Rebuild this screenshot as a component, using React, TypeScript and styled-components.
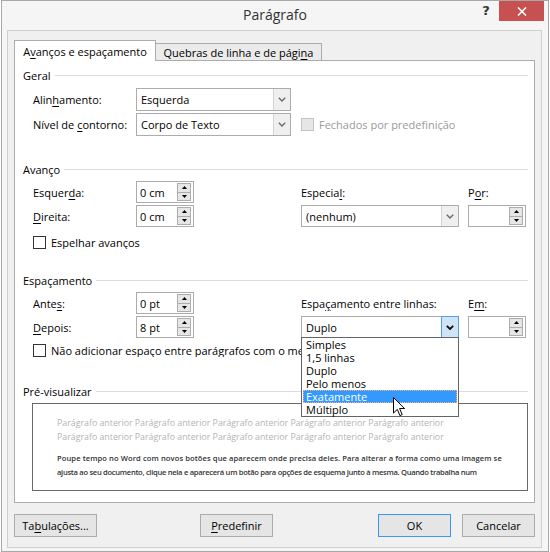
import styled, { createGlobalStyle } from "styled-components";

const GlobalStyle = createGlobalStyle`
  html, body {
    margin: 0;
    padding: 0;
    background: #ffffff;
  }
  body {
    font-family: "Open Sans", "Noto Sans", sans-serif;
    font-size: 11px;
    color: #000000;
  }
`;

const Window = styled.div`
  box-sizing: border-box;
  width: 548px;
  height: 552px;
  margin-left: 1px;
  background: #f5f5f5;
  border: 1px solid #a8a8a8;
  display: flex;
  flex-direction: column;
`;

const TitleBar = styled.div`
  height: 29px;
  display: grid;
  grid-template-columns: 1fr auto 1fr;
  align-items: start;
`;

const Title = styled.div`
  grid-column: 2;
  padding-top: 4px;
  font-size: 14px;
  color: #333333;
`;

const Caption = styled.div`
  grid-column: 3;
  justify-self: end;
  display: flex;
  align-items: flex-start;
  margin-right: 4px;
`;

const HelpGlyph = styled.div`
  width: 26px;
  padding-top: 2px;
  text-align: center;
  font-family: "DejaVu Sans", sans-serif;
  font-weight: bold;
  font-size: 13px;
  color: #333333;
`;

const CloseButton = styled.div`
  width: 45px;
  height: 20px;
  background: #c75050;
  display: flex;
  align-items: center;
  justify-content: center;
`;

const Client = styled.div`
  box-sizing: border-box;
  height: 518px;
  margin: 0 6px 0 5px;
  padding: 10px 6px 0 6px;
  background: #f0f0f0;
  border: 1px solid #cfcfcf;
  display: flex;
  flex-direction: column;
`;

const TabStrip = styled.div`
  display: flex;
  align-items: flex-end;
  height: 20px;
  margin-bottom: -1px;
  position: relative;
  z-index: 2;
`;

const Tab = styled.div<{ $active?: boolean }>`
  box-sizing: border-box;
  height: ${(p) => (p.$active ? 21 : 18)}px;
  width: ${(p) => (p.$active ? 142 : 167)}px;
  margin-left: ${(p) => (p.$active ? 0 : -1)}px;
  padding-top: ${(p) => (p.$active ? 3 : 1)}px;
  text-align: center;
  white-space: nowrap;
  border: 1px solid #acacac;
  border-bottom: ${(p) => (p.$active ? "none" : "1px solid #acacac")};
  background: ${(p) => (p.$active ? "#ffffff" : "#ebebeb")};
  position: relative;
  z-index: ${(p) => (p.$active ? 2 : 1)};
`;

const Panel = styled.div`
  box-sizing: border-box;
  height: 443px;
  padding: 0 6px 0 8px;
  background: #ffffff;
  border: 1px solid #acacac;
  position: relative;
  z-index: 1;
`;

const GroupHeading = styled.div<{ $top: number }>`
  margin-top: ${(p) => p.$top}px;
  height: 15px;
  line-height: 15px;
  display: flex;
  align-items: center;
  gap: 4px;
  white-space: nowrap;

  &::after {
    content: "";
    flex: 1;
    height: 1px;
    background: #dcdcdc;
  }
`;

const FieldGrid = styled.div<{ $top: number; $rowH: number; $gap: number }>`
  margin-top: ${(p) => p.$top}px;
  padding-left: 10px;
  display: grid;
  grid-template-columns: 103px 165px 167px 58px;
  grid-auto-rows: ${(p) => p.$rowH}px;
  row-gap: ${(p) => p.$gap}px;
`;

const Label = styled.div<{ $col?: number }>`
  grid-column: ${(p) => p.$col ?? 1};
  align-self: center;
  white-space: nowrap;
`;

const Cell = styled.div<{ $col: number; $span?: number }>`
  grid-column: ${(p) => p.$col} / span ${(p) => p.$span ?? 1};
  display: flex;
  align-items: stretch;
  position: relative;
`;

const Key = styled.span`
  text-decoration: underline;
  text-underline-offset: 2px;
`;

const ComboBox = styled.div<{ $w: number }>`
  box-sizing: border-box;
  width: ${(p) => p.$w}px;
  display: flex;
  background: #ffffff;
  border: 1px solid #acacac;
`;

const ComboText = styled.div`
  flex: 1;
  padding-left: 4px;
  display: flex;
  align-items: center;
  white-space: nowrap;
`;

const ComboButton = styled.div<{ $hot?: boolean }>`
  box-sizing: border-box;
  width: ${(p) => (p.$hot ? 18 : 17)}px;
  margin: ${(p) => (p.$hot ? "-1px -1px -1px 0" : "0")};
  display: flex;
  align-items: center;
  justify-content: center;
  background: ${(p) => (p.$hot ? "#cfe4f7" : "#efefef")};
  border-left: 1px solid ${(p) => (p.$hot ? "#569de5" : "#d4d4d4")};
  border-top: ${(p) => (p.$hot ? "1px solid #569de5" : "none")};
  border-right: ${(p) => (p.$hot ? "1px solid #569de5" : "none")};
  border-bottom: ${(p) => (p.$hot ? "1px solid #569de5" : "none")};
`;

const Spinner = styled.div`
  box-sizing: border-box;
  width: 58px;
  padding: 1px 2px 1px 0;
  display: flex;
  background: #ffffff;
  border: 1px solid #acacac;
`;

const SpinText = styled.div`
  flex: 1;
  padding-left: 3px;
  display: flex;
  align-items: center;
  white-space: nowrap;
`;

const SpinButtons = styled.div`
  width: 14px;
  display: flex;
  flex-direction: column;
`;

const SpinButton = styled.div`
  flex: 1;
  display: flex;
  align-items: center;
  justify-content: center;
  background: #e6e6e6;
  border: 1px solid #adadad;

  & + & {
    border-top: none;
  }
`;

const CheckRow = styled.label<{ $top: number; $disabled?: boolean; $clip?: number }>`
  margin-top: ${(p) => p.$top}px;
  padding-left: ${(p) => (p.$disabled ? 0 : 10)}px;
  height: 13px;
  width: ${(p) => (p.$clip ? `${p.$clip}px` : "auto")};
  overflow: hidden;
  display: flex;
  align-items: center;
  gap: 5px;
  white-space: nowrap;
  color: ${(p) => (p.$disabled ? "#9a9a9a" : "#000000")};
  align-self: center;
`;

const CheckBox = styled.span<{ $disabled?: boolean }>`
  box-sizing: border-box;
  flex: none;
  width: 13px;
  height: 13px;
  background: ${(p) => (p.$disabled ? "#e6e6e6" : "#ffffff")};
  border: 1px solid ${(p) => (p.$disabled ? "#c4c4c4" : "#333333")};
`;

const DropList = styled.div`
  box-sizing: border-box;
  position: absolute;
  top: calc(100% - 1px);
  left: 0;
  width: 158px;
  padding: 0 1px;
  background: #ffffff;
  border: 1px solid #646464;
  z-index: 10;
`;

const DropItem = styled.div<{ $selected?: boolean }>`
  height: 13px;
  line-height: 13px;
  padding-left: 3px;
  white-space: nowrap;
  background: ${(p) => (p.$selected ? "#3399ff" : "transparent")};
  color: ${(p) => (p.$selected ? "#ffffff" : "#000000")};
  outline: ${(p) => (p.$selected ? "1px dotted #f3b27a" : "none")};
  outline-offset: -1px;
`;

const Pointer = styled.svg`
  position: absolute;
  left: 91px;
  top: 59px;
`;

const PreviewBox = styled.div`
  box-sizing: border-box;
  height: 88px;
  margin: 4px 0 0 9px;
  padding: 12px 0 0 24px;
  background: #ffffff;
  border: 1px solid #696969;
  overflow: hidden;
`;

const PreviewLine = styled.div<{ $muted?: boolean; $track?: number }>`
  height: 14px;
  line-height: 14px;
  white-space: nowrap;
  font-size: ${(p) => (p.$muted ? 8.8 : 7.6)}px;
  font-weight: ${(p) => (p.$muted ? 400 : 600)};
  letter-spacing: ${(p) => p.$track ?? 0}px;
  color: ${(p) => (p.$muted ? "#b4b4b4" : "#333333")};
`;

const PreviewGap = styled.div`
  height: 7px;
`;

const ButtonRow = styled.div`
  margin-top: 11px;
  display: flex;
  height: 23px;
`;

const DialogButton = styled.div<{ $w: number; $default?: boolean; $gap?: number }>`
  box-sizing: border-box;
  width: ${(p) => p.$w}px;
  margin-left: ${(p) => p.$gap ?? 0}px;
  display: flex;
  align-items: center;
  justify-content: center;
  background: #e5e5e5;
  border: 1px solid ${(p) => (p.$default ? "#3399ff" : "#acacac")};
`;

const Spacer = styled.div`
  flex: 1;
`;

function Chevron({ hot }: { hot?: boolean }) {
  return (
    <svg width="8" height="5" viewBox="0 0 8 5">
      <path
        d="M0.8 0.8 L4 4 L7.2 0.8"
        fill="none"
        stroke={hot ? "#111111" : "#6a6a6a"}
        strokeWidth={hot ? 1.9 : 1.4}
      />
    </svg>
  );
}

function Combo({ value, width, hot }: { value: string; width: number; hot?: boolean }) {
  return (
    <ComboBox $w={width}>
      <ComboText>{value}</ComboText>
      <ComboButton $hot={hot}>
        <Chevron hot={hot} />
      </ComboButton>
    </ComboBox>
  );
}

function Spin({ value }: { value: string }) {
  return (
    <Spinner>
      <SpinText>{value}</SpinText>
      <SpinButtons>
        <SpinButton>
          <svg width="5" height="3" viewBox="0 0 5 3">
            <path d="M0 3 L2.5 0 L5 3 Z" fill="#000" />
          </svg>
        </SpinButton>
        <SpinButton>
          <svg width="5" height="3" viewBox="0 0 5 3">
            <path d="M0 0 L2.5 3 L5 0 Z" fill="#000" />
          </svg>
        </SpinButton>
      </SpinButtons>
    </Spinner>
  );
}

const lineOptions = ["Simples", "1,5 linhas", "Duplo", "Pelo menos", "Exatamente", "Múltiplo"];

const previous =
  "Parágrafo anterior Parágrafo anterior Parágrafo anterior Parágrafo anterior Parágrafo anterior";

export default function App() {
  return (
    <>
      <GlobalStyle />
      <Window>
        <TitleBar>
          <Title>Parágrafo</Title>
          <Caption>
            <HelpGlyph>?</HelpGlyph>
            <CloseButton>
              <svg width="10" height="9" viewBox="0 0 10 9">
                <path d="M1 0.5 L9 8.5 M9 0.5 L1 8.5" stroke="#ffffff" strokeWidth="1.6" />
              </svg>
            </CloseButton>
          </Caption>
        </TitleBar>

        <Client>
          <TabStrip>
            <Tab $active>
              A<Key>v</Key>anços e espaçamento
            </Tab>
            <Tab>
              Quebras de linha e de pági<Key>n</Key>a
            </Tab>
          </TabStrip>

          <Panel>
            <GroupHeading $top={7}>Geral</GroupHeading>
            <FieldGrid $top={5} $rowH={23} $gap={2}>
              <Label>
                Alin<Key>h</Key>amento:
              </Label>
              <Cell $col={2}>
                <Combo value="Esquerda" width={155} />
              </Cell>
              <Label>
                Nível de <Key>c</Key>ontorno:
              </Label>
              <Cell $col={2}>
                <Combo value="Corpo de Texto" width={155} />
              </Cell>
              <Cell $col={3} $span={2}>
                <CheckRow $top={0} $disabled>
                  <CheckBox $disabled />
                  <span>Fechados por predefinição</span>
                </CheckRow>
              </Cell>
            </FieldGrid>

            <GroupHeading $top={26}>Avanço</GroupHeading>
            <FieldGrid $top={4} $rowH={22} $gap={2}>
              <Label>
                Esquer<Key>d</Key>a:
              </Label>
              <Cell $col={2}>
                <Spin value="0 cm" />
              </Cell>
              <Label $col={3}>
                Especia<Key>l</Key>:
              </Label>
              <Label $col={4}>
                P<Key>o</Key>r:
              </Label>
              <Label>
                <Key>D</Key>ireita:
              </Label>
              <Cell $col={2}>
                <Spin value="0 cm" />
              </Cell>
              <Cell $col={3}>
                <Combo value="(nenhum)" width={158} />
              </Cell>
              <Cell $col={4}>
                <Spin value="" />
              </Cell>
            </FieldGrid>
            <CheckRow $top={9}>
              <CheckBox />
              <span>
                Es<Key>p</Key>elhar avanços
              </span>
            </CheckRow>

            <GroupHeading $top={24}>Espaçamento</GroupHeading>
            <FieldGrid $top={4} $rowH={22} $gap={2}>
              <Label>
                Ante<Key>s</Key>:
              </Label>
              <Cell $col={2}>
                <Spin value="0 pt" />
              </Cell>
              <Label $col={3}>
                Espa<Key>ç</Key>amento entre linhas:
              </Label>
              <Label $col={4}>
                E<Key>m</Key>:
              </Label>
              <Label>
                <Key>D</Key>epois:
              </Label>
              <Cell $col={2}>
                <Spin value="8 pt" />
              </Cell>
              <Cell $col={3}>
                <Combo value="Duplo" width={158} hot />
                <DropList>
                  {lineOptions.map((option) => (
                    <DropItem key={option} $selected={option === "Exatamente"}>
                      {option}
                    </DropItem>
                  ))}
                  <Pointer width="13" height="20" viewBox="0 0 13 20">
                    <path
                      d="M0.5 0.5 L0.5 16 L4.3 12.4 L6.9 18.6 L9.2 17.6 L6.6 11.5 L11.6 11.5 Z"
                      fill="#ffffff"
                      stroke="#000000"
                      strokeWidth="1"
                      strokeLinejoin="miter"
                    />
                  </Pointer>
                </DropList>
              </Cell>
              <Cell $col={4}>
                <Spin value="" />
              </Cell>
            </FieldGrid>
            <CheckRow $top={6} $clip={278}>
              <CheckBox />
              <span>
                Não adicionar espaço entre parágra<Key>f</Key>os com o mesmo estilo
              </span>
            </CheckRow>

            <GroupHeading $top={27}>Pré-visualizar</GroupHeading>
            <PreviewBox>
              <PreviewLine $muted>{previous}</PreviewLine>
              <PreviewLine $muted>{previous}</PreviewLine>
              <PreviewGap />
              <PreviewLine $track={0.08}>
                Poupe tempo no Word com novos botões que aparecem onde precisa deles. Para alterar a forma
                como uma imagem se
              </PreviewLine>
              <PreviewLine $track={-0.3}>
                ajusta ao seu documento, clique nela e aparecerá um botão para opções de esquema junto à
                mesma. Quando trabalha num
              </PreviewLine>
            </PreviewBox>
          </Panel>

          <ButtonRow>
            <DialogButton $w={83}>
              Ta<Key>b</Key>ulações...
            </DialogButton>
            <DialogButton $w={73} $gap={103}>
              <Key>P</Key>redefinir
            </DialogButton>
            <Spacer />
            <DialogButton $w={73} $default>
              OK
            </DialogButton>
            <DialogButton $w={73} $gap={11}>
              Cancelar
            </DialogButton>
          </ButtonRow>
        </Client>
      </Window>
    </>
  );
}
